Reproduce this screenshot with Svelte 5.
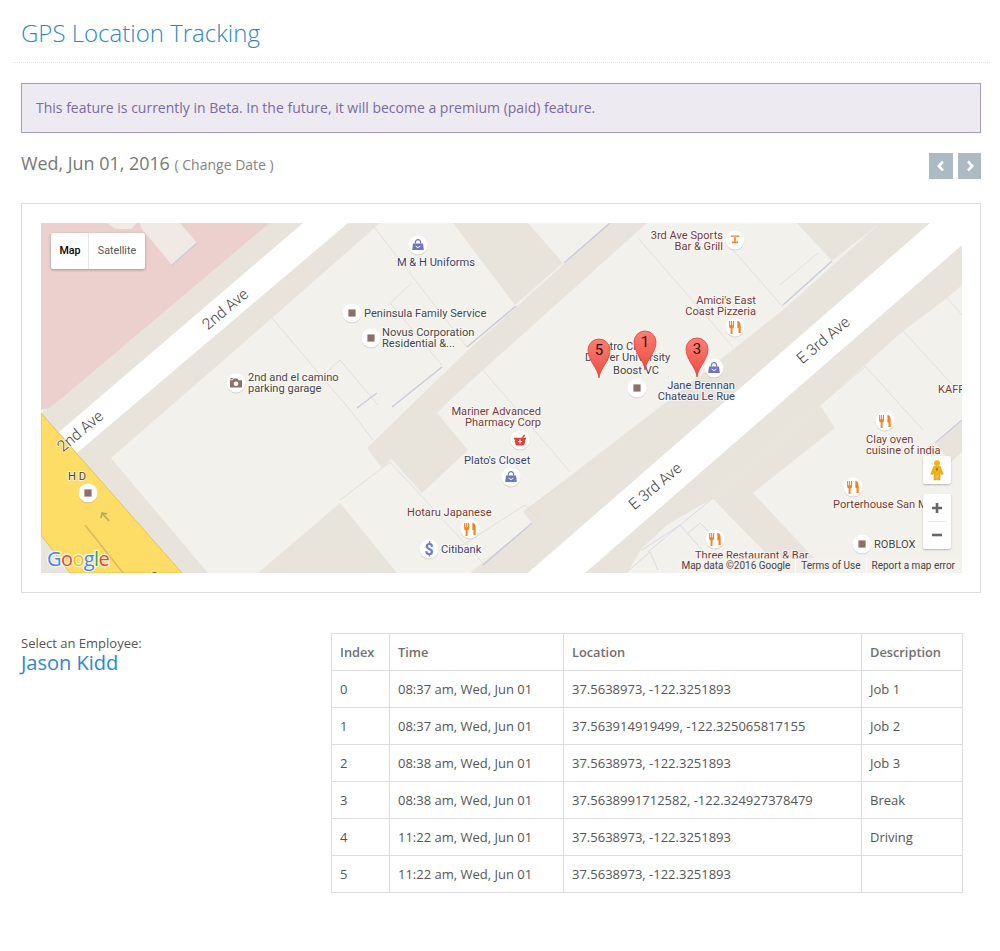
<script lang="ts">
  const BLUE = '#3b3f6e';
  const BROWN = '#7b3a32';
  const DARK = '#454545';

  const bands = [
    '270,223 380,223 272,318 111,458 208,573 182,573 41,413 60,400',
    '610,223 647,223 483,370 450,400 382,468 367,448 467,351',
    '453,223 528,223 563,263 515,305',
    '437,413 468,450 422,493 388,455',
    '880,223 930,223 528,573 470,573 532,523 523,512 660,407 783,310',
    '797,223 880,223 832,261',
    '962,245 585,573 627,573 642,548 667,525 713,498 820,405 903,331 947,298 962,285',
    '713,498 820,405 835,428 753,493 828,573 785,573',
    '258,573 340,503 397,573',
    '41,535 70,573 41,573',
    '962,421 936,444 951,462 962,452'
  ];

  const shades = [
    [172, 265, 197, 243], [564, 263, 610, 223], [783, 305, 832, 261],
    [467, 347, 516, 306], [392, 407, 442, 367], [357, 408, 377, 393],
    [483, 565, 532, 523], [935, 443, 962, 420]
  ];

  const lines = [
    '272,318 350,410 373,440', '322,376 340,360 378,405',
    '340,500 390,462 483,563', '483,370 570,472', '523,512 580,472',
    '371,223 467,347', '412,283 390,303 442,365',
    '638,238 733,347', '727,243 783,307', '818,253 780,285',
    '947,298 962,315', '903,331 962,395', '865,366 923,430',
    '820,405 866,366', '713,498 757,543',
    '455,550 525,505 540,520'
  ];

  const plotLines = [
    '642,550 680,525 713,498', '648,552 680,525 705,553',
    '688,533 700,523 708,531', '627,572 650,552 658,570'
  ];

  const labels = [
    { x: 436, y: 266, t: 'M & H Uniforms', a: 'middle', c: BLUE },
    { x: 364, y: 317, t: 'Peninsula Family Service', a: 'start', c: DARK },
    { x: 382, y: 336, t: 'Novus Corporation', a: 'start', c: DARK },
    { x: 382, y: 347, t: 'Residential &...', a: 'start', c: DARK },
    { x: 248, y: 381, t: '2nd and el camino', a: 'start', c: DARK },
    { x: 248, y: 392, t: 'parking garage', a: 'start', c: DARK },
    { x: 77, y: 480, t: 'H D', a: 'middle', c: DARK },
    { x: 541, y: 415, t: 'Mariner Advanced', a: 'end', c: BROWN },
    { x: 541, y: 426, t: 'Pharmacy Corp', a: 'end', c: BROWN },
    { x: 464, y: 464, t: "Plato's Closet", a: 'start', c: BLUE },
    { x: 407, y: 516, t: 'Hotaru Japanese', a: 'start', c: BROWN },
    { x: 441, y: 553, t: 'Citibank', a: 'start', c: BLUE },
    { x: 594, y: 350, t: 'Metro City', a: 'start', c: DARK },
    { x: 585, y: 361, t: 'Denver University', a: 'start', c: DARK },
    { x: 613, y: 374, t: 'Boost VC', a: 'start', c: DARK },
    { x: 735, y: 389, t: 'Jane Brennan', a: 'end', c: BLUE },
    { x: 735, y: 400, t: 'Chateau Le Rue', a: 'end', c: BLUE },
    { x: 723, y: 239, t: '3rd Ave Sports', a: 'end', c: BROWN },
    { x: 723, y: 250, t: 'Bar & Grill', a: 'end', c: BROWN },
    { x: 756, y: 304, t: "Amici's East", a: 'end', c: BROWN },
    { x: 756, y: 315, t: 'Coast Pizzeria', a: 'end', c: BROWN },
    { x: 866, y: 443, t: 'Clay oven', a: 'start', c: BROWN },
    { x: 866, y: 454, t: 'cuisine of india', a: 'start', c: BROWN },
    { x: 833, y: 508, t: 'Porterhouse San Mateo', a: 'start', c: BROWN },
    { x: 695, y: 559, t: 'Three Restaurant & Bar', a: 'start', c: BROWN },
    { x: 874, y: 548, t: 'ROBLOX', a: 'start', c: DARK },
    { x: 938, y: 393, t: 'KAFFEE', a: 'start', c: BROWN },
    { x: 151, y: 580, t: 'S', a: 'start', c: '#6b3f1a' }
  ];

  const pois = [
    { x: 418, y: 245, i: 'bag' }, { x: 352, y: 313, i: 'sq' }, { x: 371, y: 338, i: 'sq' },
    { x: 236, y: 383, i: 'camera' }, { x: 88, y: 493, i: 'sq' }, { x: 520, y: 440, i: 'mortar' },
    { x: 511, y: 477, i: 'bag' }, { x: 470, y: 529, i: 'food' }, { x: 429, y: 549, i: 'dollar' },
    { x: 637, y: 388, i: 'sq' }, { x: 714, y: 368, i: 'bag' }, { x: 735, y: 240, i: 'drink' },
    { x: 735, y: 327, i: 'food' }, { x: 885, y: 421, i: 'food' }, { x: 853, y: 487, i: 'food' },
    { x: 715, y: 539, i: 'food' }, { x: 862, y: 544, i: 'sq' }
  ];

  const roadNames = [
    { x: 226, y: 310, t: '2nd Ave' }, { x: 81, y: 432, t: '2nd Ave' },
    { x: 824, y: 341, t: 'E 3rd Ave' }, { x: 656, y: 487, t: 'E 3rd Ave' }
  ];

  const pins = [
    { x: 599, y: 378, n: 5 }, { x: 645, y: 370, n: 1 }, { x: 697, y: 377, n: 3 }
  ];

  const rows = [
    ['0', '08:37 am, Wed, Jun 01', '37.5638973, -122.3251893', 'Job 1'],
    ['1', '08:37 am, Wed, Jun 01', '37.563914919499, -122.325065817155', 'Job 2'],
    ['2', '08:38 am, Wed, Jun 01', '37.5638973, -122.3251893', 'Job 3'],
    ['3', '08:38 am, Wed, Jun 01', '37.5638991712582, -122.324927378479', 'Break'],
    ['4', '11:22 am, Wed, Jun 01', '37.5638973, -122.3251893', 'Driving'],
    ['5', '11:22 am, Wed, Jun 01', '37.5638973, -122.3251893', '']
  ];
</script>

<div class="page">
  <h1 class="page-header">GPS Location Tracking</h1>

  <div class="content">
    <div class="alert">This feature is currently in Beta. In the future, it will become a premium (paid) feature.</div>

    <div class="date-row">
      <div class="date">Wed, Jun 01, 2016 <small>( Change Date )</small></div>
      <div class="nav">
        <button class="nav-btn prev" aria-label="Previous day">
          <svg width="10" height="12" viewBox="0 0 10 12"><polyline points="7,1.5 2.8,6 7,10.5" /></svg>
        </button>
        <button class="nav-btn" aria-label="Next day">
          <svg width="10" height="12" viewBox="0 0 10 12"><polyline points="3,1.5 7.2,6 3,10.5" /></svg>
        </button>
      </div>
    </div>

    <div class="map-panel">
      <div class="map">
        <svg class="map-art" width="921" height="350" viewBox="41 223 921 350">
          <defs>
            <symbol id="ic-sq" overflow="visible"><rect x="-3.6" y="-3.6" width="7.2" height="7.2" fill="#8c6f68" /></symbol>
            <symbol id="ic-bag" overflow="visible">
              <path d="M-5 -1.5h10l.8 6.5h-11.6z" fill="#6d75c4" />
              <path d="M-2.6 -1.5v-1.2a2.6 2.6 0 0 1 5.2 0v1.2" fill="none" stroke="#6d75c4" stroke-width="1.2" />
              <path d="M-2.2 0.8a2.3 2.3 0 0 0 4.4 0" fill="none" stroke="#fff" stroke-width="1" />
            </symbol>
            <symbol id="ic-food" overflow="visible">
              <g transform="scale(1.18)">
                <path d="M-5 -5v4.500q0 1.300 1.300 1.600v4.900h1.600v-4.900q1.300 -.3 1.300 -1.600v-4.500h-.9v3.500h-.7v-3.500h-.9v3.500h-.7v-3.500z" fill="#f5811f" />
                <path d="M2 -5.200q2.800 .5 2.800 4.400v5.800h-1.800v-4h-1z" fill="#f5811f" />
              </g>
            </symbol>
            <symbol id="ic-drink" overflow="visible">
              <path d="M-4.500 -4.500h9l-.6 1.500h-2.900l-.3 4.600h2.300v1.700h-6v-1.700h2.300l-.3 -4.600h-2.900z" fill="#f5811f" />
              <path d="M-2.600 -3h5.200" stroke="#fbd9b5" stroke-width=".8" />
            </symbol>
            <symbol id="ic-mortar" overflow="visible">
              <path d="M-6 -2.200h12v1.700h-1v3.400l-1.200 2.600h-7.600l-1.200 -2.600v-3.400h-1z" fill="#e0403a" />
              <path d="M1.500 -2.200l2.500 -3.400 1.200 .8-1.700 2.600z" fill="#e0403a" />
              <path d="M0 -.6v4.200M-2.100 1.500h4.200" stroke="#fff" stroke-width="1.200" />
            </symbol>
            <symbol id="ic-camera" overflow="visible">
              <path d="M-6 -2.800h2.600l1.200 -1.700h3.600l1.200 1.700h3.400v7.300h-12z" fill="#8c6f68" />
              <circle cx="0" cy="0.8" r="2.300" fill="#fff" />
              <rect x="-5.500" y="-5" width="2.200" height="1.400" fill="#8c6f68" />
            </symbol>
            <linearGradient id="pin-fill" x1="0" y1="0" x2="0" y2="1">
              <stop offset="0" stop-color="#fb7f73" />
              <stop offset="1" stop-color="#ef4a40" />
            </linearGradient>
          </defs>

          <rect x="41" y="223" width="921" height="350" fill="#f3f1ec" />
          <polygon points="41,223 270,223 60,400 50,408 41,410" fill="#ebd0cd" />
          <polygon points="107,223 137,223 131,229 115,229" fill="#f1e9e3" />
          <polygon points="140,223 180,223 197,243 172,265 141,228" fill="#f1e9e3" />

          {#each bands as points}
            <polygon {points} fill="#e8e4dc" />
          {/each}

          <polygon points="41,413 182,573 70,573 41,535" fill="#fddd66" stroke="#e6c152" stroke-width="1" />
          <line x1="85" y1="525" x2="123" y2="573" stroke="#dcb960" stroke-width="1.500" />
          <path d="M109 521l-7 -8m-1 5l1 -5 5 1" fill="none" stroke="#b9a46c" stroke-width="1.600" />

          <polygon points="59,432 303,223 348,223 77,453" fill="#fff" />
          <polygon points="930,223 962,223 962,245 585,573 528,573" fill="#fff" />

          {#each lines as points}
            <polyline {points} fill="none" stroke="#e2dfd7" stroke-width="1" />
          {/each}
          {#each plotLines as points}
            <polyline {points} fill="none" stroke="#d9dae6" stroke-width="1" />
          {/each}
          {#each shades as s}
            <line x1={s[0]} y1={s[1]} x2={s[2]} y2={s[3]} stroke="#c9cadd" stroke-width="1.400" />
          {/each}

          {#each roadNames as r}
            <text class="road" x={r.x} y={r.y} transform="rotate(-40 {r.x} {r.y})" text-anchor="middle" dominant-baseline="middle">{r.t}</text>
          {/each}

          {#each labels as l}
            <text class="label" x={l.x} y={l.y} text-anchor={l.a} fill={l.c}>{l.t}</text>
          {/each}

          {#each pois as p}
            <g transform="translate({p.x} {p.y})">
              <circle cy="1" r="9.500" fill="#000" opacity=".12" />
              <circle r="9.500" fill="#fff" />
              {#if p.i === 'dollar'}
                <text class="dollar" text-anchor="middle" y="6">$</text>
              {:else}
                <use href="#ic-{p.i}" />
              {/if}
            </g>
          {/each}

          {#each pins as p}
            <g transform="translate({p.x} {p.y})">
              <path d="M0 0c-1 -10 -11 -17 -11 -28a11 11 0 0 1 22 0c0 11 -10 18 -11 28z" fill="url(#pin-fill)" stroke="#d8453c" stroke-width=".8" />
              <text class="pin-num" y="-23" text-anchor="middle">{p.n}</text>
            </g>
          {/each}

          <text class="google" x="47" y="566">
            <tspan fill="#4285f4">G</tspan><tspan fill="#ea4335">o</tspan><tspan fill="#fbbc05">o</tspan><tspan fill="#4285f4">g</tspan><tspan fill="#34a853">l</tspan><tspan fill="#ea4335">e</tspan>
          </text>
        </svg>

        <div class="map-type">
          <span class="active">Map</span>
          <span class="sat">Satellite</span>
        </div>

        <div class="pegman">
          <svg width="14" height="21" viewBox="0 0 14 21">
            <circle cx="7" cy="3.200" r="3" fill="#f5b50f" />
            <path d="M3.800 6.500h6.400l3 7.500-1.800.6-1.400-3.200v8.600h-2.400v-5.500h-1.200v5.500h-2.400v-8.600l-1.400 3.200-1.800-.6z" fill="#f5b50f" stroke="#c98f0a" stroke-width=".5" />
            <path d="M7 7l1.200 2.500-1.200 2-1.200-2z" fill="#d9622b" />
          </svg>
        </div>

        <div class="zoom">
          <div class="zoom-btn">
            <svg width="14" height="14" viewBox="0 0 14 14"><path d="M7 2v10M2 7h10" stroke="#666" stroke-width="2.600" /></svg>
          </div>
          <div class="zoom-btn sep">
            <svg width="14" height="14" viewBox="0 0 14 14"><path d="M2 7h10" stroke="#666" stroke-width="2.600" /></svg>
          </div>
        </div>

        <div class="attribution">
          <span>Map data ©2016 Google</span>
          <span>Terms of Use</span>
          <span>Report a map error</span>
        </div>
      </div>
    </div>

    <div class="bottom">
      <div class="employee">
        <div class="select-label">Select an Employee:</div>
        <div class="name">Jason Kidd</div>
      </div>

      <table>
        <colgroup>
          <col style="width: 58px" />
          <col style="width: 174px" />
          <col style="width: 298px" />
          <col style="width: 101px" />
        </colgroup>
        <thead>
          <tr>
            <th>Index</th>
            <th>Time</th>
            <th>Location</th>
            <th>Description</th>
          </tr>
        </thead>
        <tbody>
          {#each rows as row}
            <tr>
              {#each row as cell}
                <td>{cell}</td>
              {/each}
            </tr>
          {/each}
        </tbody>
      </table>
    </div>
  </div>
</div>

<style>
  :global(body) {
    background: #fff;
    font-family: "Open Sans", "Liberation Sans", sans-serif;
    font-size: 13px;
    color: #555;
  }

  .page {
    padding: 0 10px 58px 13px;
  }

  .page-header {
    margin: 0 0 20px;
    padding: 16px 8px 12px;
    height: 34px;
    box-sizing: content-box;
    font-size: 24px;
    line-height: 34px;
    font-weight: 300;
    color: #2f86c6;
    border-bottom: 1px dotted #e2e2e2;
  }

  .content {
    padding: 0 9px 0 8px;
  }

  .alert {
    padding: 14px;
    line-height: 20px;
    font-size: 14px;
    color: #7a6b9e;
    background: #edeaf2;
    border: 1px solid #a59bc5;
  }

  .date-row {
    display: flex;
    justify-content: space-between;
    align-items: flex-start;
    margin: 20px 0 24px;
    height: 26px;
  }

  .date {
    font-size: 17.900px;
    line-height: 20px;
    color: #777;
  }

  .date small {
    font-size: 14px;
    color: #848484;
  }

  .nav {
    display: flex;
    gap: 5px;
  }

  .nav-btn {
    display: flex;
    align-items: center;
    justify-content: center;
    width: 23px;
    height: 26px;
    padding: 0;
    border: 0;
    background: #abbac3;
  }

  .nav-btn.prev {
    width: 24px;
  }

  .nav-btn polyline {
    fill: none;
    stroke: #fff;
    stroke-width: 2.600;
  }

  .map-panel {
    padding: 19px;
    border: 1px solid #ddd;
    margin-bottom: 40px;
  }

  .map {
    position: relative;
    width: 921px;
    height: 350px;
    overflow: hidden;
  }

  .map-art {
    display: block;
  }

  .label {
    font: 11.100px Roboto, sans-serif;
    paint-order: stroke;
    stroke: rgba(255, 255, 255, 0.65);
    stroke-width: 2px;
  }

  .road {
    font: 300 15.500px Roboto, sans-serif;
    fill: #3e3e3e;
    paint-order: stroke;
    stroke: rgba(255, 255, 255, 0.7);
    stroke-width: 1.500px;
  }

  .dollar {
    font: 700 16px Roboto, sans-serif;
    fill: #6b78c8;
  }

  .pin-num {
    font: 15px Roboto, sans-serif;
    fill: #2a1512;
  }

  .google {
    font: 500 20px "Open Sans", sans-serif;
    letter-spacing: -0.6px;
    paint-order: stroke;
    stroke: rgba(255, 255, 255, 0.75);
    stroke-width: 2.500px;
  }

  .map-type {
    position: absolute;
    left: 10px;
    top: 10px;
    display: flex;
    height: 36px;
    background: #fff;
    border-radius: 2px;
    box-shadow: 0 1px 3px rgba(0, 0, 0, 0.3);
    font: 10.700px/36px Roboto, sans-serif;
    color: #565656;
  }

  .map-type span {
    box-sizing: border-box;
    text-align: center;
  }

  .map-type .active {
    width: 38px;
    padding-left: 1px;
    color: #000;
    font-weight: 500;
    border-right: 1px solid #e6e6e6;
  }

  .map-type .sat {
    width: 56px;
  }

  .pegman {
    position: absolute;
    left: 882px;
    top: 233px;
    display: flex;
    align-items: center;
    justify-content: center;
    width: 28px;
    height: 28px;
    background: #fff;
    border-radius: 2px;
    box-shadow: 0 1px 2px rgba(0, 0, 0, 0.25);
  }

  .zoom {
    position: absolute;
    left: 882px;
    top: 271px;
    width: 28px;
    background: #fff;
    border-radius: 2px;
    box-shadow: 0 1px 2px rgba(0, 0, 0, 0.25);
  }

  .zoom-btn {
    display: flex;
    align-items: center;
    justify-content: center;
    height: 27px;
  }

  .zoom-btn.sep {
    position: relative;
    height: 28px;
  }

  .zoom-btn.sep::before {
    content: "";
    position: absolute;
    left: 5px;
    right: 5px;
    top: 0;
    border-top: 1px solid #e6e6e6;
  }

  .attribution {
    position: absolute;
    right: 0;
    bottom: 0;
    display: flex;
    height: 15px;
    background: rgba(245, 243, 238, 0.72);
    font: 10px/15px Roboto, sans-serif;
    color: #444;
  }

  .attribution span {
    padding: 0 5px;
    white-space: nowrap;
  }

  .attribution span:last-child {
    padding-right: 7px;
  }

  .attribution span + span {
    border-left: 1px solid rgba(255, 255, 255, 0.7);
  }

  .bottom {
    display: grid;
    grid-template-columns: 310px 632px;
  }

  .select-label {
    margin-top: 2px;
    line-height: 17px;
    font-size: 13px;
    color: #555;
  }

  .name {
    font-size: 20px;
    line-height: 22px;
    color: #2b87cf;
  }

  table {
    width: 631px;
    table-layout: fixed;
    border-collapse: collapse;
    font-size: 13px;
  }

  th,
  td {
    padding: 8px;
    height: 20px;
    line-height: 20px;
    text-align: left;
    border: 1px solid #ddd;
    color: #555;
    white-space: nowrap;
  }

  th {
    font-size: 12.800px;
    font-weight: 600;
    color: #707070;
  }
</style>
